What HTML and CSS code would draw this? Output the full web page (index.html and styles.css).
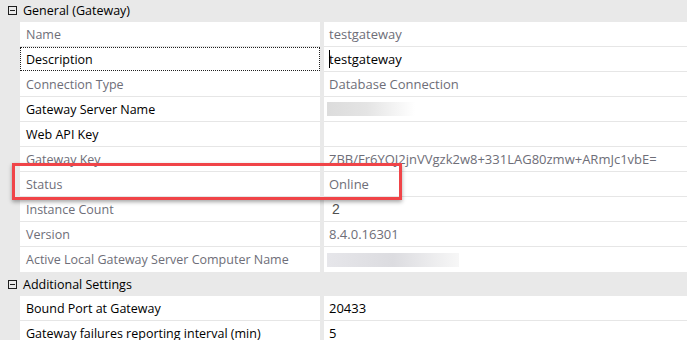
FILE: index.html
```html
<!DOCTYPE html>
<html lang="en">

<head>
    <meta charset="UTF-8">
    <meta name="viewport" content="width=device-width, initial-scale=1.0">
    <title>Gateway properties</title>
    <link rel="stylesheet" href="styles.css">
</head>

<body>
    <div id="property-grid">
        <div class="category first">
            <span class="toggle"></span>
            <span class="category-title">General (Gateway)</span>
        </div>
        <div class="row">
            <div class="gutter"></div>
            <div class="name readonly">Name</div>
            <div class="split"></div>
            <div class="value readonly">testgateway</div>
        </div>
        <div class="row">
            <div class="gutter"></div>
            <div class="name focused">Description</div>
            <div class="split"></div>
            <div class="value"><span class="caret"></span>testgateway</div>
        </div>
        <div class="row">
            <div class="gutter"></div>
            <div class="name readonly">Connection Type</div>
            <div class="split"></div>
            <div class="value readonly">Database Connection</div>
        </div>
        <div class="row">
            <div class="gutter"></div>
            <div class="name">Gateway Server Name</div>
            <div class="split"></div>
            <div class="value"><span class="blur blur-short"></span></div>
        </div>
        <div class="row">
            <div class="gutter"></div>
            <div class="name">Web API Key</div>
            <div class="split"></div>
            <div class="value"></div>
        </div>
        <div class="row">
            <div class="gutter"></div>
            <div class="name readonly">Gateway Key</div>
            <div class="split"></div>
            <div class="value readonly">ZBB/Fr6YOJ2jnVVgzk2w8+331LAG80zmw+ARmJc1vbE=</div>
        </div>
        <div class="row">
            <div class="gutter"></div>
            <div class="name readonly">Status</div>
            <div class="split"></div>
            <div class="value readonly">Online</div>
        </div>
        <div class="row">
            <div class="gutter"></div>
            <div class="name readonly">Instance Count</div>
            <div class="split"></div>
            <div class="value number">2</div>
        </div>
        <div class="row">
            <div class="gutter"></div>
            <div class="name readonly">Version</div>
            <div class="split"></div>
            <div class="value readonly">8.4.0.16301</div>
        </div>
        <div class="row last">
            <div class="gutter"></div>
            <div class="name readonly">Active Local Gateway Server Computer Name</div>
            <div class="split"></div>
            <div class="value"><span class="blur blur-long"></span></div>
        </div>
        <div class="category">
            <span class="toggle"></span>
            <span class="category-title">Additional Settings</span>
        </div>
        <div class="row">
            <div class="gutter"></div>
            <div class="name">Bound Port at Gateway</div>
            <div class="split"></div>
            <div class="value">20433</div>
        </div>
        <div class="row">
            <div class="gutter"></div>
            <div class="name">Gateway failures reporting interval (min)</div>
            <div class="split"></div>
            <div class="value">5</div>
        </div>

        <!-- highlight drawn over the Status row -->
        <div id="highlight"></div>
    </div>
</body>

</html>
```

FILE: styles.css
```css
* {
    margin: 0;
    padding: 0;
    box-sizing: border-box;
}

body {
    font-family: "Open Sans", "Noto Sans", sans-serif;
    font-size: 12px;
    background-color: #FFFFFF;
    color: #000000;
    overflow: hidden;
}

#property-grid {
    position: relative;
    width: 687px;
}

/* category header rows */
.category {
    display: flex;
    align-items: center;
    height: 24px;
    background-color: #E9E9E9;
    padding-left: 8px;
}

.category.first {
    height: 22px;
    padding-bottom: 2px;
}

.toggle {
    position: relative;
    width: 9px;
    height: 9px;
    border: 1px solid #1E1E1E;
    margin-right: 6px;
}

.toggle::after {
    content: "";
    position: absolute;
    left: 1px;
    top: 3px;
    width: 5px;
    height: 1px;
    background-color: #1E1E1E;
}

.category-title {
    font-size: 12.5px;
    color: #000000;
}

/* property rows */
.row {
    display: flex;
    height: 25px;
}

.gutter {
    width: 20px;
    background-color: #E9E9E9;
}

.split {
    width: 4px;
    background-color: #E9E9E9;
}

.name,
.value {
    display: flex;
    align-items: center;
    border-bottom: 1px solid #E6E6E6;
    white-space: nowrap;
    overflow: hidden;
    font-size: 13px;
}

.row.last .name,
.row.last .value {
    border-bottom: none;
}

.name {
    width: 300px;
    padding-left: 6px;
    font-size: 12.5px;
}

.value {
    flex: 1;
    padding-left: 5px;
}

.readonly {
    color: #6E6E78;
}

.name.focused {
    border: 1px dotted #202020;
    margin-bottom: 1px;
    padding-left: 5px;
    height: 24px;
}

.caret {
    display: inline-block;
    width: 1px;
    height: 18px;
    background-color: #000000;
    margin-right: -1px;
}

.value.number {
    font-family: "Liberation Sans", Arial, sans-serif;
    font-size: 14px;
    color: #505050;
    padding-left: 8px;
}

/* blurred-out values */
.blur {
    display: block;
    height: 14px;
    margin-left: -2px;
}

.blur-short {
    width: 88px;
    background: linear-gradient(to right, #DCDCDC, #E4E4E4 45%, #FFFFFF);
}

.blur-long {
    width: 132px;
    background: linear-gradient(to right, #E6E6EA, #DCDCE0 50%, #F7F7F7);
}

#highlight {
    position: absolute;
    left: 12px;
    top: 163px;
    width: 390px;
    height: 37px;
    border: 3px solid #F04448;
    box-shadow: 0 2px 4px rgba(0, 0, 0, 0.35);
}
```
